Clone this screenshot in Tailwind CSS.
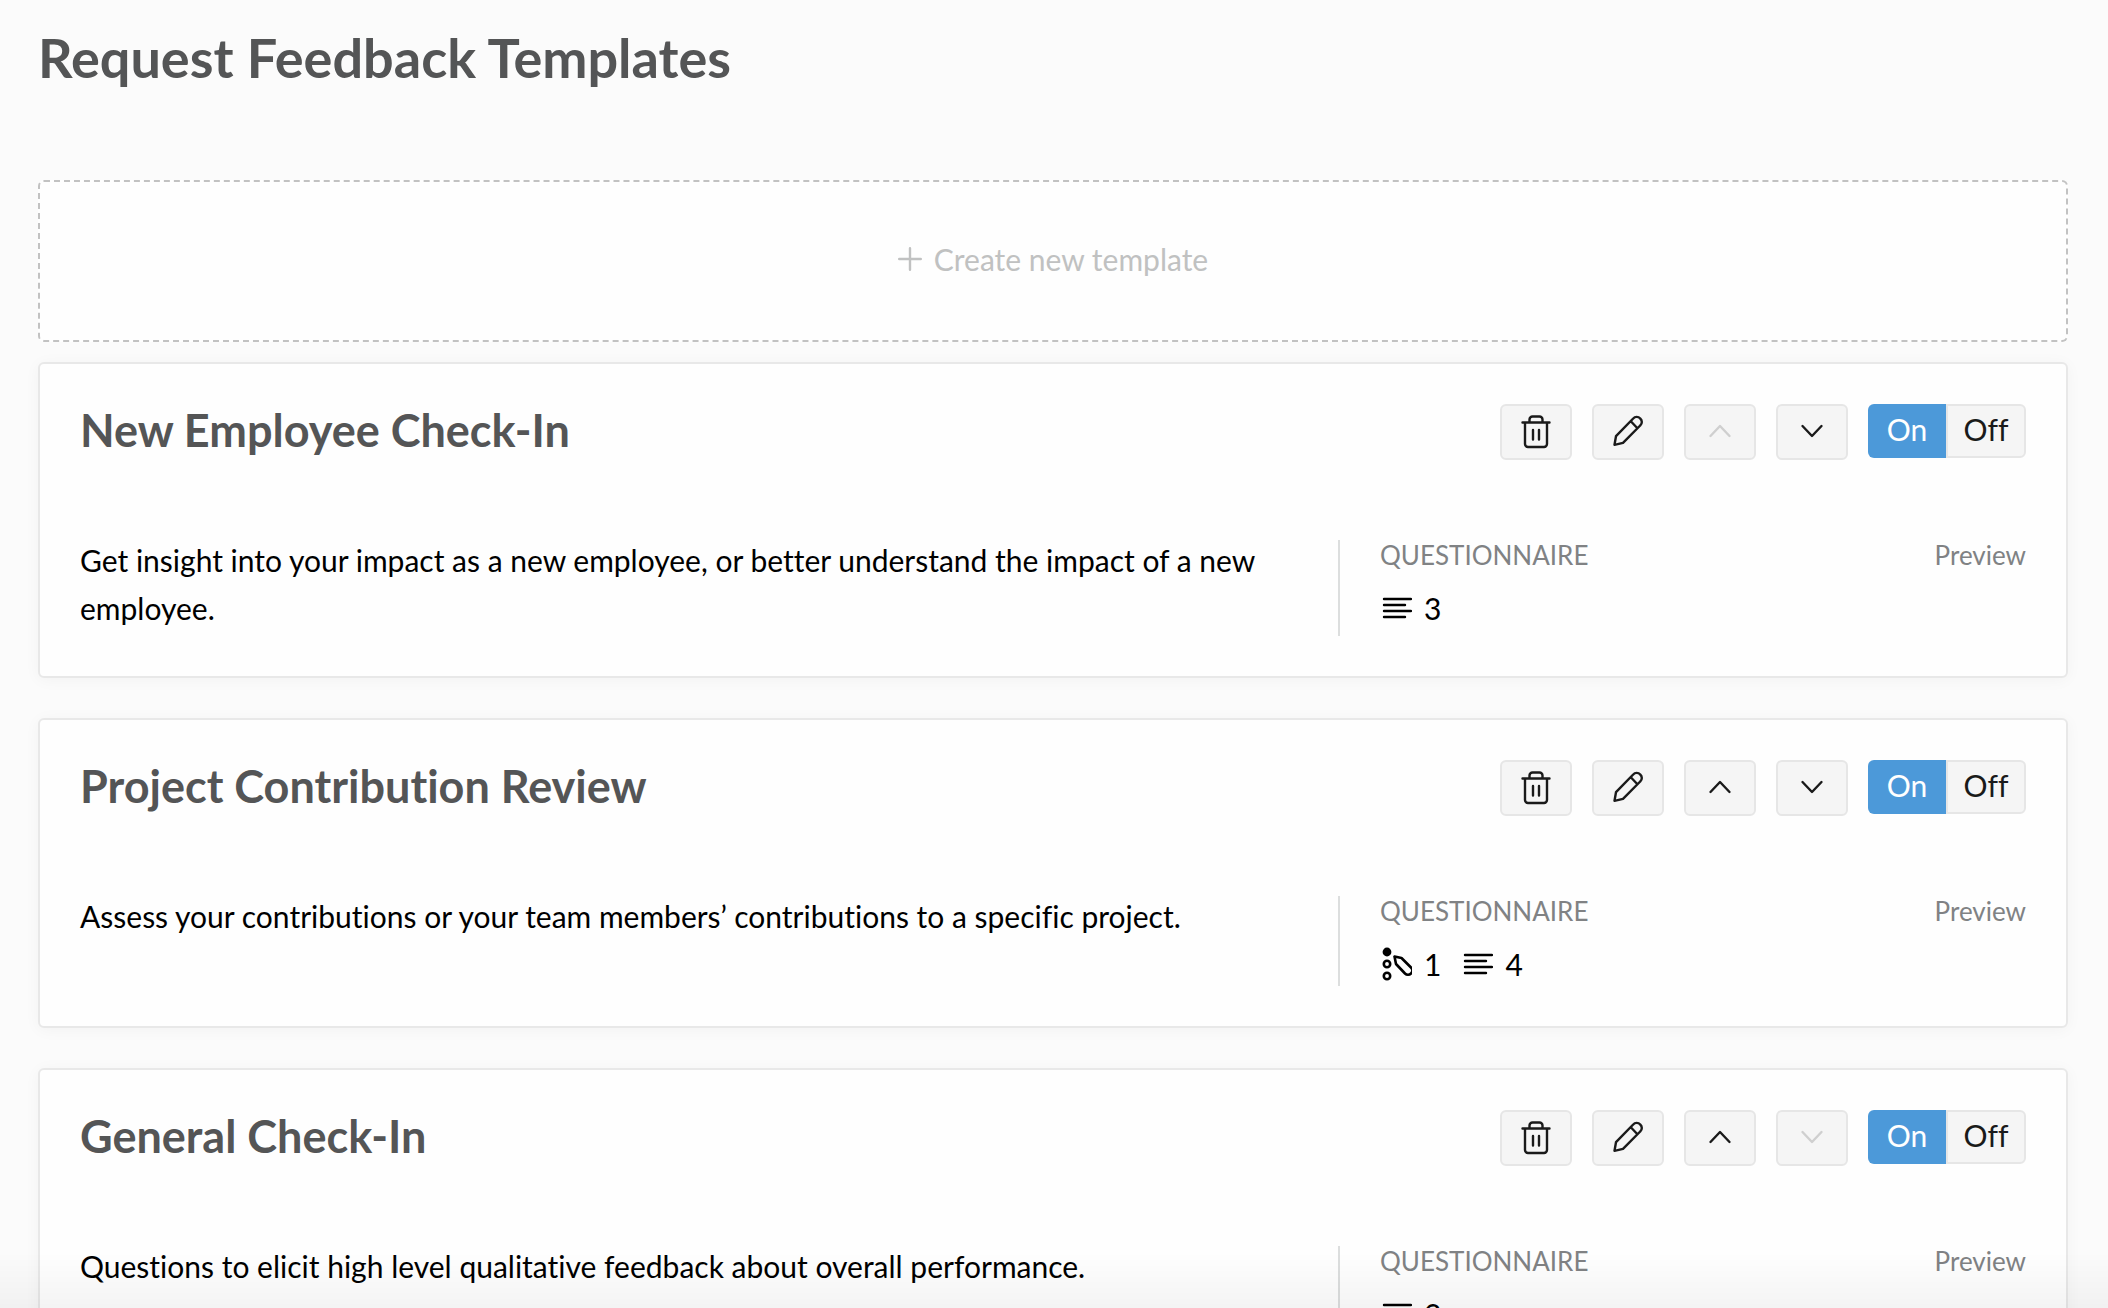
<!DOCTYPE html>
<html lang="en">
<head>
  <meta charset="UTF-8" />
  <meta name="viewport" content="width=device-width, initial-scale=1.0" />
  <title>Request Feedback Templates</title>
  <script src="https://cdn.jsdelivr.net/npm/@tailwindcss/browser@4"></script>
</head>
<body class="h-screen overflow-hidden bg-[#fbfbfb] font-['Lato',sans-serif] text-black [font-variant-ligatures:none]">
  <!-- Icons -->
  <svg class="hidden">
    <symbol id="trash" viewBox="0 0 32 40" fill="none" stroke="currentColor" stroke-width="2.4" stroke-linecap="round" stroke-linejoin="round">
      <path d="M2.500 11.500H29.500M9.500 11.500V8.500a3 3 0 0 1 3-3h7a3 3 0 0 1 3 3v3M5 11.500V33a3 3 0 0 0 3 3H24a3 3 0 0 0 3-3V11.500M13 19V28.500M19 19V28.500" />
    </symbol>
    <symbol id="pencil" viewBox="0 0 32 32" fill="none" stroke="currentColor" stroke-width="2.4" stroke-linecap="round" stroke-linejoin="round">
      <path d="M2.500 29.800L4 21.200L21.200 3.500a4.600 4.600 0 0 1 7 0a4.600 4.600 0 0 1 0 7L11 27.800ZM18.800 6.200L25.200 13" />
    </symbol>
    <symbol id="up" viewBox="0 0 24 14" fill="none" stroke="currentColor" stroke-width="2.4" stroke-linecap="round" stroke-linejoin="round">
      <path d="M2.500 12L12 2L21.500 12" />
    </symbol>
    <symbol id="down" viewBox="0 0 24 14" fill="none" stroke="currentColor" stroke-width="2.4" stroke-linecap="round" stroke-linejoin="round">
      <path d="M2.500 2L12 12L21.500 2" />
    </symbol>
    <symbol id="lines" viewBox="0 0 32 22" fill="none" stroke="currentColor" stroke-width="2.4" stroke-linecap="round">
      <path d="M4 2H31M4 8H25M4 14H31M4 20H25" />
    </symbol>
    <symbol id="choice" viewBox="0 0 32 34" fill="none" stroke="currentColor" stroke-width="2.6" stroke-linejoin="round">
      <circle cx="7" cy="5" r="4.400" fill="currentColor" stroke="none" />
      <circle cx="7" cy="17" r="3.200" />
      <circle cx="7" cy="29" r="3.200" />
      <path d="M14.500 9.500L21.500 11L31 20.500a4.200 4.200 0 0 1-6 6L16 17Z" />
    </symbol>
  </svg>

  <main class="pr-10 pl-[38px] pt-[26px]">
    <h1 class="text-[54px] leading-[64px] font-bold text-[#545556]">Request Feedback Templates</h1>

    <button class="mt-[90px] flex h-[162px] w-full items-center justify-center gap-3 rounded-md border-2 border-dashed border-[#c2c2c2] bg-[#fefefe] pb-1 text-[30px] text-[#c0c1c1]">
      <svg class="size-6" viewBox="0 0 24 24" stroke="currentColor" stroke-width="2.4" stroke-linecap="round"><path d="M12 1.200V22.800M1.200 12H22.800" /></svg>
      Create new template
    </button>

    <div id="templateList" class="mt-5 space-y-10"></div>
  </main>

  <!-- Bottom fade -->
  <div class="pointer-events-none fixed inset-x-0 bottom-0 h-14 bg-linear-to-t from-black/4 to-transparent"></div>

  <script>
    const templates = [
      { name: "New Employee Check-In", text: "Get insight into your impact as a new employee, or better understand the impact of a new employee.", questions: [["lines", 3]] },
      { name: "Project Contribution Review", text: "Assess your contributions or your team members’ contributions to a specific project.", questions: [["choice", 1], ["lines", 4]] },
      { name: "General Check-In", text: "Questions to elicit high level qualitative feedback about overall performance.", questions: [["lines", 3]] },
    ];

    const iconSizes = {
      trash: "w-8 h-10",
      pencil: "size-8",
      up: "w-6 h-3.5",
      down: "w-6 h-3.5",
      lines: "w-8 h-[22px]",
      choice: "w-8 h-[34px]",
    };

    function icon(name) {
      return `<svg class="${iconSizes[name]}"><use href="#${name}" /></svg>`;
    }

    function iconButton(name, label, disabled) {
      return `<button aria-label="${label}" ${disabled ? "disabled" : ""} class="flex h-14 w-[72px] items-center justify-center rounded-md border-2 border-[#e6e6e6] bg-[#f5f5f5] pb-0.5 text-[#1a1a1a] disabled:text-[#cfcfcf]">${icon(name)}</button>`;
    }

    document.getElementById("templateList").innerHTML = templates.map((t, i) => `
      <section class="rounded-md border-2 border-[#e8e8e8] bg-[#fefefe] p-10 shadow-[0_2px_16px_rgba(0,0,0,0.04)]">
        <div class="flex items-start justify-between">
          <h2 class="text-[45px] leading-[52px] font-bold text-[#545556]">${t.name}</h2>
          <div class="flex gap-5">
            ${iconButton("trash", "Delete")}
            ${iconButton("pencil", "Edit")}
            ${iconButton("up", "Move up", i === 0)}
            ${iconButton("down", "Move down", i === templates.length - 1)}
            <div class="flex h-[54px] text-[30px]">
              <button aria-pressed="true" class="w-[78px] rounded-l-md bg-[#4c99d9] pb-1 text-white">On</button>
              <button aria-pressed="false" class="w-20 rounded-r-md border-2 border-[#e6e6e6] bg-[#f5f5f5] pb-1 text-[#1a1a1a]">Off</button>
            </div>
          </div>
        </div>
        <div class="mt-20 flex">
          <p class="-mt-1 flex-1 pr-12 pb-1 text-[30px] leading-[48px]">${t.text}</p>
          <div class="min-h-[90px] w-[688px] border-l-2 border-[#dcdede] pl-10">
            <div class="flex justify-between text-[26px] leading-[30px] text-[#808284]">
              <h3>QUESTIONNAIRE</h3>
              <a href="#">Preview</a>
            </div>
            <div class="mt-[18px] flex gap-5 text-[30px] leading-10">
              ${t.questions.map(([type, count]) => `<span class="flex items-center gap-3">${icon(type)}${count}</span>`).join("")}
            </div>
          </div>
        </div>
      </section>
    `).join("");
  </script>
</body>
</html>
